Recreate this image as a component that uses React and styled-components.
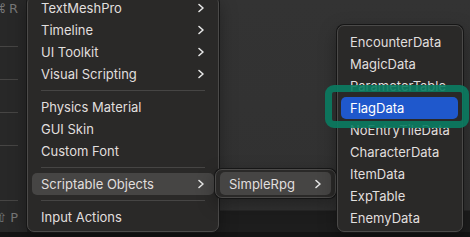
import React from "react";
import styled, { createGlobalStyle } from "styled-components";

const GlobalStyle = createGlobalStyle`
  html, body {
    margin: 0;
    padding: 0;
    background: #151515;
  }
  body {
    font-family: "Inter", "Noto Sans", "Liberation Sans", sans-serif;
    -webkit-font-smoothing: antialiased;
  }
`;

const Screen = styled.div`
  position: relative;
  width: 470px;
  height: 237px;
  overflow: hidden;
  display: flex;
  align-items: flex-start;
  background: linear-gradient(
    to bottom,
    #333333 0,
    #313131 210px,
    #1d1d1d 211px,
    #1d1d1d 232px,
    #141414 232px
  );
`;

const Menu = styled.div`
  flex: none;
  box-sizing: border-box;
  width: ${({ $width }) => $width}px;
  margin-top: ${({ $top }) => $top}px;
  margin-left: ${({ $left }) => $left || 0}px;
  padding: ${({ $pad }) => $pad};
  background: #2a2928;
  border: 1px solid #4b4a49;
  border-radius: 7px;
  box-shadow: 0 0 0 1px #161616, 0 6px 18px rgba(0, 0, 0, 0.35);
  display: flex;
  flex-direction: column;
  position: relative;
  z-index: ${({ $z }) => $z || 1};
`;

const ParentMenu = styled.div`
  flex: none;
  box-sizing: border-box;
  width: 27px;
  height: 235px;
  margin-top: -3px;
  padding-right: 9px;
  background: #282828;
  display: flex;
  flex-direction: column;
`;

const Shortcut = styled.div`
  height: 22px;
  display: flex;
  align-items: center;
  justify-content: flex-end;
  gap: 3px;
  white-space: nowrap;
  font-family: "DejaVu Sans", "Inter", sans-serif;
  font-size: 13px;
  color: #767676;
`;

const Item = styled.div`
  height: ${({ $h }) => $h || 22}px;
  flex: none;
  display: flex;
  align-items: center;
  justify-content: space-between;
  padding: 0 9px;
  border-radius: 5px;
  font-size: 13px;
  white-space: nowrap;
  color: ${({ $active }) => ($active === "blue" ? "#ffffff" : "#e0dfde")};
  background: ${({ $active }) =>
    $active === "blue" ? "#1f58cc" : $active === "gray" ? "#464544" : "transparent"};
`;

const Separator = styled.div`
  height: 11px;
  flex: none;
  display: flex;
  align-items: center;
  padding: 0 ${({ $inset }) => $inset}px;

  &::after {
    content: "";
    flex: 1;
    height: 1px;
    background: #464544;
  }
`;

const Middle = styled.div`
  flex: none;
  width: 118px;
  display: flex;
`;

const Highlight = styled.div`
  position: absolute;
  left: 325px;
  top: 85px;
  width: 144px;
  height: 43px;
  box-sizing: border-box;
  border: 7px solid rgba(10, 124, 98, 0.9);
  border-radius: 9px;
  z-index: 5;
  pointer-events: none;
`;

const Chevron = () => (
  <svg width="8" height="10" viewBox="0 0 8 10">
    <polyline
      points="2,1.5 6,5 2,8.5"
      fill="none"
      stroke="#e6e6e6"
      strokeWidth="1.6"
      strokeLinecap="round"
      strokeLinejoin="round"
    />
  </svg>
);

const mainMenu = [
  { label: "TextMeshPro", sub: true },
  { label: "Timeline", sub: true },
  { label: "UI Toolkit", sub: true },
  { label: "Visual Scripting", sub: true },
  "sep",
  { label: "Physics Material" },
  { label: "GUI Skin" },
  { label: "Custom Font" },
  "sep",
  { label: "Scriptable Objects", sub: true, active: "gray" },
  "sep",
  { label: "Input Actions" },
];

const parentRows = [
  ["⌘", "R"], null, "sep", null, "sep", null, "sep", null, "sep", null, null, "sep", ["⇧", "P"],
];

const dataItems = [
  "EncounterData",
  "MagicData",
  "ParameterTable",
  "FlagData",
  "NoEntryTileData",
  "CharacterData",
  "ItemData",
  "ExpTable",
  "EnemyData",
];

const App = () => {
  return (
    <>
      <GlobalStyle />
      <Screen>
        <ParentMenu>
          {parentRows.map((row, i) =>
            row === "sep" ? (
              <Separator key={i} $inset={0} />
            ) : (
              <Shortcut key={i}>
                {row && (
                  <>
                    <span>{row[0]}</span>
                    <span>{row[1]}</span>
                  </>
                )}
              </Shortcut>
            )
          )}
        </ParentMenu>

        <Menu $width={192} $top={-4} $pad="0 4px 3px 4px" $z={2}>
          {mainMenu.map((item, i) =>
            item === "sep" ? (
              <Separator key={i} $inset={9} />
            ) : (
              <Item key={i} $active={item.active}>
                <span>{item.label}</span>
                {item.sub && <Chevron />}
              </Item>
            )
          )}
        </Menu>

        <Middle>
          <Menu $width={121} $top={169} $left={-4} $pad="2px 4px" $z={3}>
            <Item $h={23} $active="gray">
              <span>SimpleRpg</span>
              <Chevron />
            </Item>
          </Menu>
        </Middle>

        <Menu $width={126} $top={25} $pad="5px 4px 2px 3px" $z={4}>
          {dataItems.map((label) => (
            <Item key={label} $active={label === "FlagData" ? "blue" : undefined}>
              {label}
            </Item>
          ))}
        </Menu>

        <Highlight />
      </Screen>
    </>
  );
};

export default App;
